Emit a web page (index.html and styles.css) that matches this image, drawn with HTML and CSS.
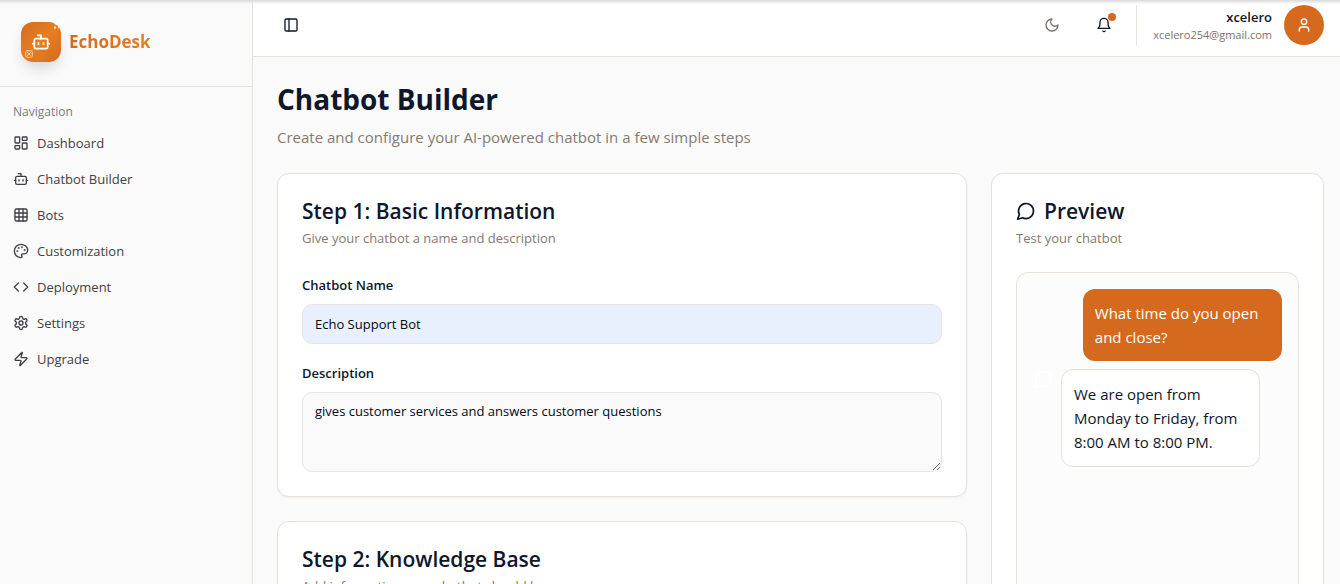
FILE: index.html
```html
<!DOCTYPE html>
<html lang="en">
<head>
    <meta charset="UTF-8">
    <meta name="viewport" content="width=device-width, initial-scale=1.0">
    <title>Chatbot Builder | EchoDesk</title>
    <link rel="stylesheet" href="styles.css">
</head>
<body>
    <div class="app">
        <!-- Sidebar -->
        <aside class="sidebar">
            <div class="brand">
                <div class="brand-logo">
                    <svg class="icon-bot" viewBox="0 0 24 24"><path d="M12 8V4H8"/><rect width="16" height="12" x="4" y="8" rx="2"/><path d="M2 14h2M20 14h2M15 13v2M9 13v2"/></svg>
                    <svg class="icon-sparkle" viewBox="0 0 24 24"><path d="M12 3l2 6 6 2-6 2-2 6-2-6-6-2 6-2z"/><path d="M20 2v5M22 4h-5M4 18v3"/></svg>
                    <svg class="icon-chip" viewBox="0 0 24 24"><rect width="20" height="20" x="2" y="2" rx="6"/><path d="M8 8l8 8M16 8l-8 8"/></svg>
                </div>
                <span class="brand-name">EchoDesk</span>
            </div>

            <nav class="nav">
                <div class="nav-label">Navigation</div>
                <a href="#dashboard">
                    <svg viewBox="0 0 24 24"><rect width="7" height="9" x="3" y="3" rx="1"/><rect width="7" height="5" x="14" y="3" rx="1"/><rect width="7" height="9" x="14" y="12" rx="1"/><rect width="7" height="5" x="3" y="16" rx="1"/></svg>
                    Dashboard
                </a>
                <a href="#builder">
                    <svg viewBox="0 0 24 24"><path d="M12 8V4H8"/><rect width="16" height="12" x="4" y="8" rx="2"/><path d="M2 14h2M20 14h2M15 13v2M9 13v2"/></svg>
                    Chatbot Builder
                </a>
                <a href="#bots">
                    <svg viewBox="0 0 24 24"><rect width="18" height="18" x="3" y="3" rx="2"/><path d="M3 9h18M3 15h18M9 3v18M15 3v18"/></svg>
                    Bots
                </a>
                <a href="#customization">
                    <svg viewBox="0 0 24 24"><circle cx="13.5" cy="6.5" r=".5"/><circle cx="17.5" cy="10.5" r=".5"/><circle cx="8.5" cy="7.5" r=".5"/><circle cx="6.5" cy="12.5" r=".5"/><path d="M12 2C6.5 2 2 6.5 2 12s4.5 10 10 10c.926 0 1.648-.746 1.648-1.688 0-.437-.18-.835-.437-1.125-.29-.289-.438-.652-.438-1.125a1.64 1.64 0 0 1 1.668-1.668h1.996c3.051 0 5.555-2.503 5.555-5.554C21.965 6.012 17.461 2 12 2z"/></svg>
                    Customization
                </a>
                <a href="#deployment">
                    <svg viewBox="0 0 24 24"><path d="M16 18l6-6-6-6M8 6l-6 6 6 6"/></svg>
                    Deployment
                </a>
                <a href="#settings">
                    <svg viewBox="0 0 24 24"><path d="M12.22 2h-.44a2 2 0 0 0-2 2v.18a2 2 0 0 1-1 1.73l-.43.25a2 2 0 0 1-2 0l-.15-.08a2 2 0 0 0-2.73.73l-.22.38a2 2 0 0 0 .73 2.73l.15.1a2 2 0 0 1 1 1.72v.51a2 2 0 0 1-1 1.74l-.15.09a2 2 0 0 0-.73 2.73l.22.38a2 2 0 0 0 2.73.73l.15-.08a2 2 0 0 1 2 0l.43.25a2 2 0 0 1 1 1.73V20a2 2 0 0 0 2 2h.44a2 2 0 0 0 2-2v-.18a2 2 0 0 1 1-1.73l.43-.25a2 2 0 0 1 2 0l.15.08a2 2 0 0 0 2.73-.73l.22-.39a2 2 0 0 0-.73-2.73l-.15-.08a2 2 0 0 1-1-1.74v-.5a2 2 0 0 1 1-1.74l.15-.09a2 2 0 0 0 .73-2.73l-.22-.38a2 2 0 0 0-2.73-.73l-.15.08a2 2 0 0 1-2 0l-.43-.25a2 2 0 0 1-1-1.73V4a2 2 0 0 0-2-2z"/><circle cx="12" cy="12" r="3"/></svg>
                    Settings
                </a>
                <a href="#upgrade">
                    <svg viewBox="0 0 24 24"><path d="M4 14a1 1 0 0 1-.78-1.63l9.9-10.2a.5.5 0 0 1 .86.46l-1.92 6.02A1 1 0 0 0 13 10h7a1 1 0 0 1 .78 1.63l-9.9 10.2a.5.5 0 0 1-.86-.46l1.92-6.02A1 1 0 0 0 11 14z"/></svg>
                    Upgrade
                </a>
            </nav>
        </aside>

        <div class="content">
            <!-- Top bar -->
            <header class="topbar">
                <button type="button" class="icon-button" aria-label="Toggle sidebar">
                    <svg viewBox="0 0 24 24"><rect width="18" height="18" x="3" y="3" rx="2"/><path d="M9 3v18"/></svg>
                </button>
                <div class="topbar-actions">
                    <button type="button" class="icon-button muted" aria-label="Toggle theme">
                        <svg viewBox="0 0 24 24"><path d="M12 3a6 6 0 0 0 9 9 9 9 0 1 1-9-9Z"/></svg>
                    </button>
                    <button type="button" class="icon-button" aria-label="Notifications">
                        <svg viewBox="0 0 24 24"><path d="M6 8a6 6 0 0 1 12 0c0 7 3 9 3 9H3s3-2 3-9M10.3 21a1.94 1.94 0 0 0 3.4 0"/></svg>
                        <span class="badge"></span>
                    </button>
                    <div class="user">
                        <div class="user-info">
                            <div class="user-name">xcelero</div>
                            <div class="user-email">xcelero254@gmail.com</div>
                        </div>
                        <button type="button" class="avatar" aria-label="Account">
                            <svg viewBox="0 0 24 24"><circle cx="12" cy="7" r="4"/><path d="M19 21v-2a4 4 0 0 0-4-4H9a4 4 0 0 0-4 4v2"/></svg>
                        </button>
                    </div>
                </div>
            </header>

            <main>
                <h1>Chatbot Builder</h1>
                <p class="intro">Create and configure your AI-powered chatbot in a few simple steps</p>

                <div class="builder">
                    <div class="steps">
                        <section class="card">
                            <div class="card-header">
                                <h2>Step 1: Basic Information</h2>
                                <p>Give your chatbot a name and description</p>
                            </div>
                            <form class="fields">
                                <div class="field">
                                    <label for="name">Chatbot Name</label>
                                    <input type="text" id="name" name="name" value="Echo Support Bot">
                                </div>
                                <div class="field">
                                    <label for="description">Description</label>
                                    <textarea id="description" name="description">gives customer services and answers customer questions</textarea>
                                </div>
                            </form>
                        </section>

                        <section class="card">
                            <div class="card-header">
                                <h2>Step 2: Knowledge Base</h2>
                                <p>Add information your chatbot should know</p>
                            </div>
                        </section>
                    </div>

                    <!-- Chat preview -->
                    <section class="card preview">
                        <div class="card-header">
                            <h2>
                                <svg viewBox="0 0 24 24"><path d="M7.9 20A9 9 0 1 0 4 16.1L2 22Z"/></svg>
                                Preview
                            </h2>
                            <p>Test your chatbot</p>
                        </div>
                        <div class="chat">
                            <div class="message user-message">What time do you open and close?</div>
                            <div class="bot-row">
                                <svg viewBox="0 0 24 24"><path d="M7.9 20A9 9 0 1 0 4 16.1L2 22Z"/></svg>
                                <div class="message bot-message">We are open from Monday to Friday, from 8:00 AM to 8:00 PM.</div>
                            </div>
                        </div>
                    </section>
                </div>
            </main>
        </div>
    </div>
</body>
</html>
```
FILE: styles.css
```css
* {
    box-sizing: border-box;
}

body {
    margin: 0;
    height: 100vh;
    overflow: hidden;
    font-family: 'Segoe UI', 'Open Sans', 'Noto Sans', sans-serif;
    font-size: 15px;
    line-height: 24px;
    color: #0f172a;
    background: #fafafa;
}

/* Shadow along the top edge of the window */
body::before {
    content: "";
    position: fixed;
    top: 0;
    left: 0;
    right: 0;
    height: 4px;
    background: linear-gradient(#d8d8d8, rgba(230, 230, 230, 0));
    z-index: 10;
}

h1, h2, p {
    margin: 0;
}

button {
    font: inherit;
    color: inherit;
    border: none;
    background: none;
    padding: 0;
    cursor: pointer;
}

svg {
    width: 16px;
    height: 16px;
    flex-shrink: 0;
    fill: none;
    stroke: currentColor;
    stroke-width: 2;
    stroke-linecap: round;
    stroke-linejoin: round;
}

.app {
    display: flex;
    height: 100vh;
}

/* Sidebar */
.sidebar {
    width: 253px;
    flex-shrink: 0;
    border-right: 1px solid #e7e0dc;
    background: #fafafa;
}

.brand {
    display: flex;
    align-items: center;
    gap: 8px;
    padding: 22px 21px 24px;
    border-bottom: 1px solid #e5e5e5;
}

.brand-logo {
    position: relative;
    display: flex;
    align-items: center;
    justify-content: center;
    width: 40px;
    height: 40px;
    border-radius: 12px;
    color: #fff;
    background: linear-gradient(135deg, #d56a1f, #e67e22 50%, #d56a1f);
    box-shadow: 0 8px 14px -3px rgba(0, 0, 0, 0.16);
}

.brand-logo .icon-bot {
    width: 20px;
    height: 20px;
}

.brand-logo .icon-sparkle {
    position: absolute;
    top: -4px;
    right: -4px;
    width: 12px;
    height: 12px;
    stroke-width: 3;
}

.brand-logo .icon-chip {
    position: absolute;
    bottom: 4px;
    left: 4px;
    width: 8px;
    height: 8px;
    stroke-width: 3;
    opacity: 0.7;
}

.brand-name {
    font-size: 17px;
    font-weight: 700;
    line-height: 28px;
    color: transparent;
    background: linear-gradient(90deg, #d56a1f, #e67e22);
    background-clip: text;
    -webkit-background-clip: text;
}

.nav {
    display: flex;
    flex-direction: column;
    gap: 4px;
    padding: 8px 5px;
}

.nav-label {
    margin-bottom: -6px;
    padding: 0 8px;
    font-size: 12px;
    font-weight: 500;
    line-height: 34px;
    color: #7b7b80;
}

.nav a {
    display: flex;
    align-items: center;
    gap: 8px;
    padding: 0 8px;
    border-radius: 6px;
    font-size: 13px;
    line-height: 32px;
    color: #3f3f46;
    text-decoration: none;
}

.nav a:hover {
    background: #f4f4f5;
}

/* Top bar */
.content {
    flex: 1;
    min-width: 0;
}

.topbar {
    display: flex;
    align-items: center;
    justify-content: space-between;
    padding: 5px 16px 11px 24px;
    border-bottom: 1px solid #e7e0dc;
    background: #fff;
}

.icon-button {
    position: relative;
    display: flex;
    align-items: center;
    justify-content: center;
    width: 28px;
    height: 28px;
}

.icon-button.muted {
    color: #78716c;
}

.badge {
    position: absolute;
    top: 2px;
    right: 2px;
    width: 8px;
    height: 8px;
    border-radius: 50%;
    background: #d56a1f;
}

.topbar-actions {
    display: flex;
    align-items: center;
    gap: 24px;
}

.user {
    display: flex;
    align-items: center;
    gap: 12px;
    margin-left: -6px;
    padding-left: 16px;
    border-left: 1px solid #e7e0dc;
}

.user-info {
    text-align: right;
}

.user-name {
    font-size: 13px;
    font-weight: 600;
    line-height: 20px;
}

.user-email {
    font-size: 11px;
    line-height: 16px;
    color: #78716c;
}

.avatar {
    display: flex;
    align-items: center;
    justify-content: center;
    width: 40px;
    height: 40px;
    border-radius: 50%;
    color: #fff;
    background: #d56a1f;
}

/* Page */
main {
    padding: 24px 16px 24px 24px;
}

h1 {
    font-size: 28px;
    font-weight: 700;
    line-height: 36px;
}

.intro {
    margin: 8px 0 24px;
    color: #857a72;
}

.builder {
    display: grid;
    grid-template-columns: repeat(3, 1fr);
    gap: 24px;
}

.steps {
    display: flex;
    flex-direction: column;
    grid-column: span 2;
    gap: 24px;
}

.card {
    padding: 24px;
    border: 1px solid #e7e0dc;
    border-radius: 12px;
    background: #fff;
    box-shadow: 0 1px 2px rgba(0, 0, 0, 0.05);
}

.card-header {
    margin-bottom: 24px;
}

.card-header h2 {
    display: flex;
    align-items: center;
    gap: 8px;
    font-size: 21px;
    font-weight: 600;
    line-height: 26px;
}

.card-header h2 svg {
    width: 20px;
    height: 20px;
}

.card-header p {
    margin-top: 4px;
    font-size: 13px;
    line-height: 20px;
    color: #857a72;
}

.fields {
    display: flex;
    flex-direction: column;
    gap: 16px;
}

.field label {
    display: block;
    margin-bottom: 6px;
    font-size: 13px;
    font-weight: 600;
    line-height: 26px;
}

.field input,
.field textarea {
    display: block;
    width: 100%;
    padding: 8px 12px;
    border: 1px solid #e8e4e1;
    border-radius: 10px;
    font-family: inherit;
    font-size: 13px;
    line-height: 20px;
    color: #020817;
    background: #fafafa;
}

.field input {
    height: 40px;
    background: #e8f0fe;
}

.field textarea {
    height: 80px;
    resize: vertical;
}

/* Chat preview */
.chat {
    display: flex;
    flex-direction: column;
    gap: 8px;
    height: 400px;
    padding: 16px;
    border: 1px solid #e7e0dc;
    border-radius: 12px;
    background: #fcfcfc;
}

.message {
    padding: 12px;
    border-radius: 12px;
}

.user-message {
    align-self: flex-end;
    width: 80%;
    color: #fff;
    background: #d56a1f;
}

.bot-row {
    display: flex;
    gap: 8px;
}

.bot-row svg {
    width: 20px;
    height: 20px;
    color: #fff;
}

.bot-message {
    width: 80%;
    border: 1px solid #e7e0dc;
    background: #fff;
}
```
